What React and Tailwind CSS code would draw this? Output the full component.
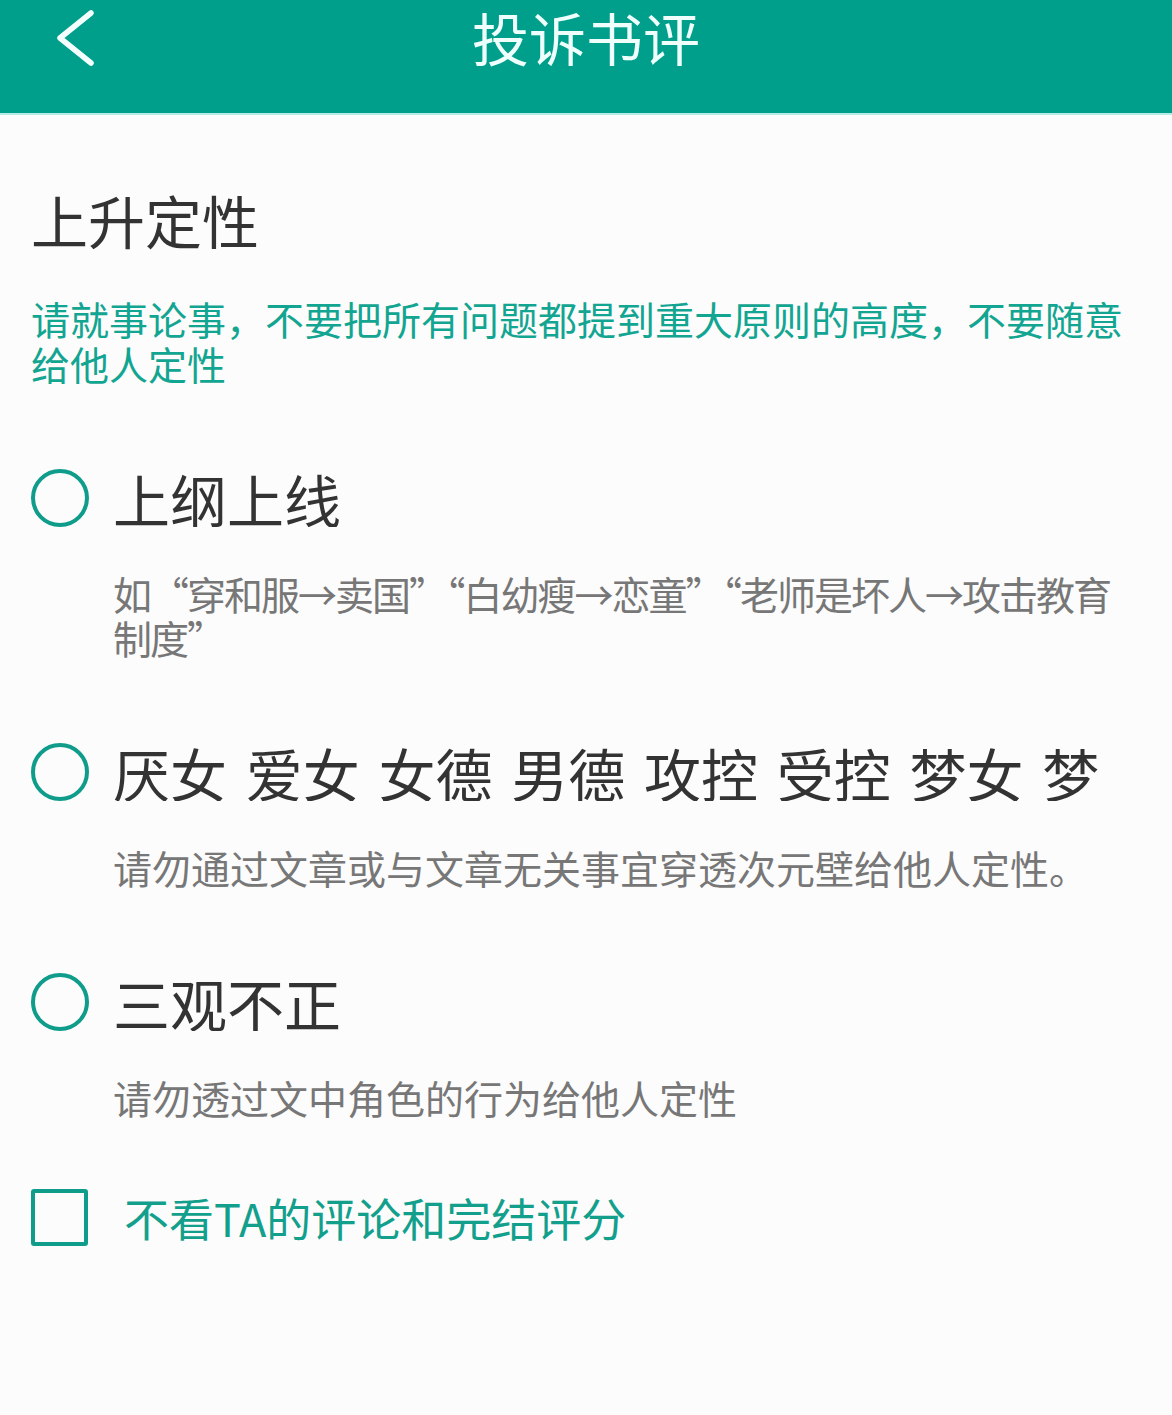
import React from "react";

const options = [
  {
    label: "上纲上线",
    tight: true,
    desc: (
      <>
        如“穿和服→卖国”“白幼瘦→恋童”“老师是坏人→攻击教育
        <br />
        制度”
      </>
    ),
  },
  {
    label: "厌女 爱女 女德 男德 攻控 受控 梦女 梦",
    desc: "请勿通过文章或与文章无关事宜穿透次元壁给他人定性。",
  },
  {
    label: "三观不正",
    desc: "请勿透过文中角色的行为给他人定性",
  },
];

const Option = ({ label, desc, first, tight }) => (
  <div className={first ? "mt-[83px]" : "mt-[84px]"}>
    <div className="flex items-center">
      <span className="w-[58px] h-[58px] shrink-0 rounded-full border-[4px] border-[#0f9c8a]" />
      <span className="ml-[24px] text-[57px] leading-[57px] text-[#333333] whitespace-nowrap overflow-hidden [word-spacing:6px]">
        {label}
      </span>
    </div>
    <p
      className={
        "mt-[44px] pl-[82px] text-[39px] leading-[44px] text-[#777777] whitespace-nowrap " +
        (tight ? "tracking-[-2px]" : "")
      }
    >
      {desc}
    </p>
  </div>
);

export default function App() {
  return (
    <div
      className="min-h-screen w-full bg-[#fcfcfc] overflow-hidden"
      style={{ fontFamily: '"Noto Sans CJK SC", "Noto Sans", sans-serif' }}
    >
      {/* top bar */}
      <div className="h-[115px] bg-[#009f8b] border-b-[2px] border-[#b7ece4] grid grid-cols-[1fr_auto_1fr]">
        <div className="pl-[55px] pt-[10px]">
          <svg width="42" height="56" viewBox="0 0 42 56" fill="none">
            <path
              d="M36 3 L5 28 L36 53"
              stroke="#f4fffd"
              strokeWidth="5.5"
              strokeLinecap="round"
              strokeLinejoin="round"
            />
          </svg>
        </div>
        <h1 className="pt-[8px] text-[57px] leading-[57px] text-[#eefffc]">投诉书评</h1>
        <div />
      </div>

      <div className="pl-[31px] pr-[30px]">
        <h2 className="mt-[76px] text-[57px] leading-[57px] text-[#333333]">上升定性</h2>
        <p className="mt-[48px] text-[39px] leading-[45px] text-[#12a591] whitespace-nowrap">
          请就事论事，不要把所有问题都提到重大原则的高度，不要随意
          <br />
          给他人定性
        </p>

        {options.map((o, i) => (
          <Option key={i} label={o.label} desc={o.desc} tight={o.tight} first={i === 0} />
        ))}

        <div className="mt-[70px] flex items-center">
          <span className="w-[57px] h-[57px] shrink-0 rounded-[3px] border-[4px] border-[#0f9c8a]" />
          <span className="ml-[36px] text-[45px] leading-[48px] text-[#12a08d]">
            不看TA的评论和完结评分
          </span>
        </div>
      </div>
    </div>
  );
}
